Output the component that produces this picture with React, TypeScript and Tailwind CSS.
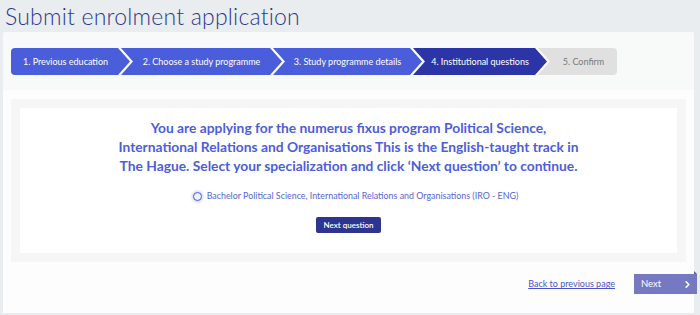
import { ChevronRight } from "lucide-react";

const steps = [
  { label: "1. Previous education", width: "w-[119px]", state: "done", first: true },
  { label: "2. Choose a study programme", width: "w-[161px]", state: "done" },
  { label: "3. Study programme details", width: "w-[149px]", state: "done" },
  { label: "4. Institutional questions", width: "w-[134px]", state: "active" },
  { label: "5. Confirm", width: "w-[79px]", state: "todo", last: true },
];

function Stepper() {
  return (
    <div className="flex h-[27px]">
      {steps.map((s, i) => {
        const colour =
          s.state === "active"
            ? "bg-[#2c35a8] text-white"
            : s.state === "todo"
            ? "bg-[#e0e0e0] text-[#7a7a7a]"
            : "bg-[#4a5ddb] text-white";
        const shape = s.first
          ? "rounded-l-[4px] [clip-path:polygon(0_0,calc(100%-12px)_0,100%_50%,calc(100%-12px)_100%,0_100%)] pl-[2px] pr-[12px]"
          : s.last
          ? "rounded-r-[4px] [clip-path:polygon(0_0,100%_0,100%_100%,0_100%,12px_50%)] pl-[12px]"
          : "[clip-path:polygon(0_0,calc(100%-12px)_0,100%_50%,calc(100%-12px)_100%,0_100%,12px_50%)] px-[12px]";
        return (
          <div
            key={s.label}
            className={`${s.width} ${colour} ${shape} ${i > 0 ? "-ml-[9px]" : ""} flex shrink-0 items-center justify-center text-[9px] whitespace-nowrap`}
          >
            {s.label}
          </div>
        );
      })}
    </div>
  );
}

export default function App() {
  return (
    <div className="h-[315px] w-[700px] overflow-hidden bg-[#e9edf0] font-['Lato','Noto_Sans',sans-serif]">
      <h1 className="h-[32px] pl-[5px] pt-[1px] text-[23px] leading-[30px] font-light text-[#2e3a8a] tracking-[0.2px]">
        Submit enrolment application
      </h1>

      <div className="ml-[3px] mr-[6px] h-[281px] rounded-t-[3px] bg-[#fdfdfd] flex flex-col">
        {/* Steps */}
        <div className="h-[58px] rounded-t-[3px] bg-[#f8f9f9] pl-[8px] pt-[16px]">
          <Stepper />
        </div>

        {/* Question panel */}
        <div className="mx-[8px] mt-[9px] bg-[#f6f6f6] p-[9px]">
          <div className="flex h-[145px] flex-col items-center bg-white pt-[10px]">
            <p className="text-center text-[13.8px] leading-[19px] font-bold text-[#4c5ed8]">
              You are applying for the numerus fixus program Political Science,
              <br />
              International Relations and Organisations This is the English-taught track in
              <br />
              The Hague. Select your specialization and click ‘Next question’ to continue.
            </p>

            <label className="ml-[14px] mt-[14px] flex h-[14px] items-center gap-[5px] text-[8.9px] text-[#5566cc]">
              <span className="h-[9px] w-[9px] rounded-full border-[1.5px] border-[#4c5ed8] bg-[#eef0fb] shadow-[0_0_3px_1px_rgba(76,94,216,0.3)]" />
              Bachelor Political Science, International Relations and Organisations (IRO - ENG)
            </label>

            <button className="mt-[14px] h-[16px] rounded-[2px] bg-[#2c3592] px-[7px] text-[8px] font-semibold text-white">
              Next question
            </button>
          </div>
        </div>

        {/* Footer */}
        <div className="mt-[12px] flex items-center justify-end">
          <a href="#" className="mr-[19px] text-[9px] text-[#4656c8] underline">
            Back to previous page
          </a>
          <div className="relative -mr-[3px]">
            <button className="flex h-[20px] w-[63px] items-center justify-between bg-[#7479c1] pl-[7px] pr-[4px] text-[9.5px] text-white">
              Next
              <ChevronRight className="h-[11px] w-[11px]" strokeWidth={3.5} />
            </button>
            <span className="absolute -top-[3px] right-0 h-[3px] w-[3px] bg-[#5a5fa8] [clip-path:polygon(0_0,100%_100%,0_100%)]" />
          </div>
        </div>
      </div>
    </div>
  );
}
